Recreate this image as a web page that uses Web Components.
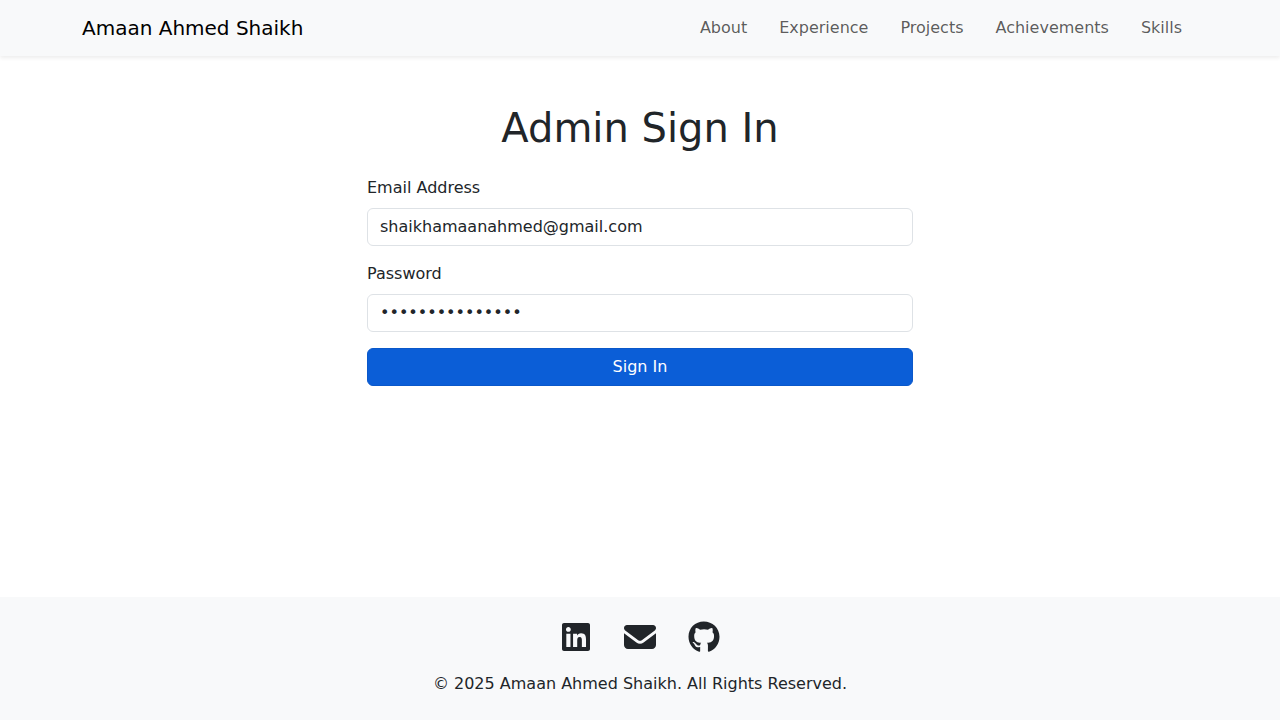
<!DOCTYPE html>
<html lang="en">
<head>
<meta charset="utf-8">
<meta name="viewport" content="width=device-width, initial-scale=1">
<title>Admin Sign In</title>
<style>
  :root {
    --ink: #212529;
    --surface: #f8f9fa;
    --line: #dee2e6;
  }
  body {
    margin: 0;
    background: #fff;
    color: var(--ink);
    font: 16px/24px "DejaVu Sans", sans-serif;
  }
</style>
</head>
<body>
<app-shell>
  <site-header slot="header" brand="Amaan Ahmed Shaikh">
    <nav-item href="#about">About</nav-item>
    <nav-item href="#experience">Experience</nav-item>
    <nav-item href="#projects">Projects</nav-item>
    <nav-item href="#achievements">Achievements</nav-item>
    <nav-item href="#skills">Skills</nav-item>
  </site-header>
  <sign-in-form></sign-in-form>
  <site-footer slot="footer">
    <social-link icon="linkedin" href="#linkedin"></social-link>
    <social-link icon="envelope" href="#email"></social-link>
    <social-link icon="github" href="#github"></social-link>
    <span slot="note">© 2025 Amaan Ahmed Shaikh. All Rights Reserved.</span>
  </site-footer>
</app-shell>

<script>
  class BaseElement extends HTMLElement {
    constructor() {
      super();
      this.attachShadow({ mode: "open" });
    }
    connectedCallback() {
      this.shadowRoot.innerHTML = "<style>*{box-sizing:border-box}</style>" + this.render();
    }
    attr(name) {
      return this.getAttribute(name) || "";
    }
  }

  customElements.define("app-shell", class extends BaseElement {
    render() {
      return `
        <style>
          :host { display: flex; flex-direction: column; min-height: 100vh; }
          main { flex: 1; padding: 48px 12px; }
        </style>
        <slot name="header"></slot>
        <main><slot></slot></main>
        <slot name="footer"></slot>`;
    }
  });

  customElements.define("site-header", class extends BaseElement {
    render() {
      return `
        <style>
          :host { display: block; background: var(--surface); box-shadow: 0 2px 4px rgba(0, 0, 0, .075); }
          header {
            display: flex; flex-wrap: wrap; align-items: center; justify-content: space-between;
            max-width: 1140px; margin: 0 auto; padding: 8px 12px;
          }
          .brand { color: #000; font-size: 20px; line-height: 30px; text-decoration: none; }
          nav { display: flex; flex-wrap: wrap; }
        </style>
        <header>
          <a class="brand" href="#home">${this.attr("brand")}</a>
          <nav><slot></slot></nav>
        </header>`;
    }
  });

  customElements.define("nav-item", class extends BaseElement {
    render() {
      return `
        <style>
          :host { display: block; margin: 0 8px; }
          a { display: block; padding: 8px; color: rgba(0, 0, 0, .65); text-decoration: none; }
          a:hover { color: rgba(0, 0, 0, .8); }
        </style>
        <a href="${this.attr("href")}"><slot></slot></a>`;
    }
  });

  customElements.define("text-field", class extends BaseElement {
    render() {
      return `
        <style>
          :host { display: block; }
          label { display: block; margin-bottom: 8px; }
          input {
            display: block; width: 100%; height: 38px; margin: 0; padding: 5px 12px 7px;
            border: 1px solid var(--line); border-radius: 6px;
            background: #fff; color: inherit; font: inherit;
          }
          input:focus { outline: 4px solid rgba(13, 110, 253, .25); border-color: #86b7fe; }
        </style>
        <label for="field">${this.attr("label")}</label>
        <input id="field" type="${this.attr("type")}" value="${this.attr("value")}">`;
    }
  });

  customElements.define("sign-in-form", class extends BaseElement {
    render() {
      return `
        <style>
          :host { display: block; max-width: 546px; margin: 0 auto; }
          h1 { margin: 0 0 24px; font-size: 40px; line-height: 48px; font-weight: 400; text-align: center; }
          form { display: grid; gap: 16px; }
          button {
            height: 38px; padding: 6px 12px; border: 1px solid #0a58ca; border-radius: 6px;
            background: #0b5ed7; color: #fff; font: inherit; cursor: pointer;
          }
        </style>
        <h1>Admin Sign In</h1>
        <form>
          <text-field label="Email Address" type="email" value="shaikhamaanahmed@gmail.com"></text-field>
          <text-field label="Password" type="password" value="correct-horse-1"></text-field>
          <button type="button">Sign In</button>
        </form>`;
    }
  });

  customElements.define("site-footer", class extends BaseElement {
    render() {
      return `
        <style>
          :host { display: block; background: var(--surface); }
          footer { padding: 24px 12px; text-align: center; }
          .links { display: flex; justify-content: center; gap: 32px; margin-bottom: 19px; }
          p { margin: 0; }
        </style>
        <footer>
          <div class="links"><slot></slot></div>
          <p><slot name="note"></slot></p>
        </footer>`;
    }
  });

  const ICONS = {
    linkedin: {
      label: "LinkedIn", box: "0 0 448 512",
      d: "M416 32H31.9C14.3 32 0 46.5 0 64.3v383.4C0 465.5 14.3 480 31.9 480H416c17.6 0 32-14.5 32-32.3V64.3c0-17.8-14.4-32.3-32-32.3zM135.4 416H69V202.2h66.5V416zm-33.2-243c-21.3 0-38.5-17.3-38.5-38.5S80.9 96 102.2 96c21.2 0 38.5 17.3 38.5 38.5 0 21.3-17.2 38.5-38.5 38.5zm282.1 243h-66.4V312c0-24.8-.5-56.7-34.5-56.7-34.6 0-39.9 27-39.9 54.9V416h-66.4V202.2h63.7v29.2h.9c8.9-16.8 30.6-34.5 62.9-34.5 67.2 0 79.7 44.3 79.7 101.9V416z"
    },
    envelope: {
      label: "Email", box: "0 0 512 512",
      d: "M48 64c-26.5 0-48 21.5-48 48 0 15.1 7.1 29.3 19.2 38.4l208 156c17.1 12.8 40.5 12.8 57.6 0l208-156c12.1-9.1 19.2-23.3 19.2-38.4 0-26.5-21.5-48-48-48L48 64zM0 196L0 384c0 35.3 28.7 64 64 64l384 0c35.3 0 64-28.7 64-64l0-188-198.4 148.8c-34.1 25.6-81.1 25.6-115.2 0L0 196z"
    },
    github: {
      label: "GitHub", box: "0 0 496 512",
      d: "M165.9 397.4c0 2-2.3 3.6-5.2 3.6-3.3.3-5.6-1.3-5.6-3.6 0-2 2.3-3.6 5.2-3.6 3-.3 5.6 1.3 5.6 3.6zm-31.1-4.5c-.7 2 1.3 4.3 4.3 4.9 2.6 1 5.6 0 6.2-2s-1.3-4.3-4.3-5.2c-2.6-.7-5.5.3-6.2 2.3zm44.2-1.7c-2.9.7-4.9 2.6-4.6 4.9.3 2 2.9 3.3 5.9 2.6 2.9-.7 4.9-2.6 4.6-4.6-.3-1.9-3-3.2-5.9-2.9zM244.8 8C106.1 8 0 113.3 0 252c0 110.9 69.8 205.8 169.5 239.2 12.8 2.3 17.3-5.6 17.3-12.1 0-6.2-.3-40.4-.3-61.4 0 0-70 15-84.7-29.8 0 0-11.4-29.1-27.8-36.6 0 0-22.9-15.7 1.6-15.4 0 0 24.9 2 38.6 25.8 21.9 38.6 58.6 27.5 72.9 20.9 2.3-16 8.8-27.1 16-33.7-55.9-6.2-112.3-14.3-112.3-110.5 0-27.5 7.6-41.3 23.6-58.9-2.6-6.5-11.1-33.3 2.6-67.9 20.9-6.5 69 27 69 27 20-5.6 41.5-8.5 62.8-8.5s42.8 2.9 62.8 8.5c0 0 48.1-33.6 69-27 13.7 34.7 5.2 61.4 2.6 67.9 16 17.7 25.8 31.5 25.8 58.9 0 96.5-58.9 104.2-114.8 110.5 9.2 7.9 17 22.9 17 46.4 0 33.7-.3 75.4-.3 83.6 0 6.5 4.6 14.4 17.3 12.1C428.2 457.8 496 362.9 496 252 496 113.3 383.5 8 244.8 8z"
    }
  };

  customElements.define("social-link", class extends BaseElement {
    render() {
      const icon = ICONS[this.attr("icon")];
      return `
        <style>
          :host { display: block; }
          a { display: block; color: var(--ink); }
          svg { display: block; width: 32px; height: 32px; fill: currentColor; }
        </style>
        <a href="${this.attr("href")}" aria-label="${icon.label}">
          <svg viewBox="${icon.box}" aria-hidden="true"><path d="${icon.d}"/></svg>
        </a>`;
    }
  });
</script>
</body>
</html>
